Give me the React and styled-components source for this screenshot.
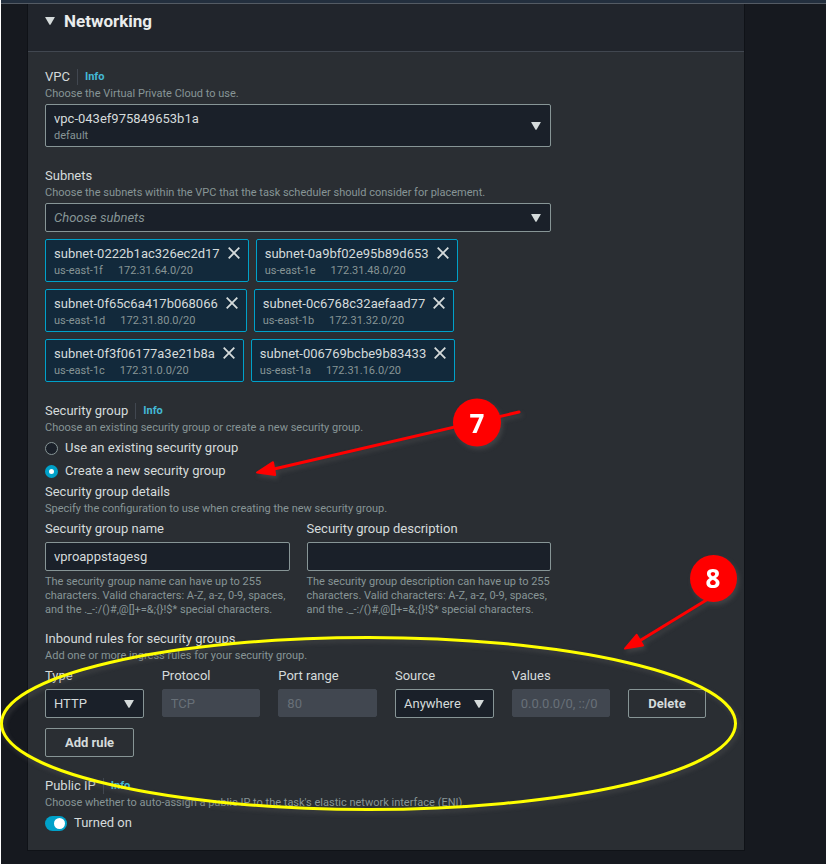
import React, { useState } from "react";
import styled, { createGlobalStyle, css } from "styled-components";

const GlobalStyle = createGlobalStyle`
  * { box-sizing: border-box; }
  body { margin: 0; background: #16191f; }
  body, button, input, select { font-family: Roboto, "Noto Sans", sans-serif; }
`;

const Page = styled.div`
  position: relative;
  min-height: 100vh;
  border-left: 1px solid #ffffff;
  background: #16191f;
  color: #d5dbdb;
  font-size: 13px;
  line-height: 18px;
`;

const TopBar = styled.div`
  height: 4px;
  background: #232f3e;
  border-bottom: 1px solid #545b64;
`;

const Panel = styled.section`
  margin: 0 82px 0 27px;
  background: #2a2e33;
  box-shadow: 0 0 0 1px #0f1217;
  clip-path: inset(0 -1px -1px -1px);
`;

const PanelHeader = styled.h2`
  margin: 0;
  padding: 5px 17px 18px;
  background: #21252c;
  border-bottom: 1px solid #414750;
`;

const PanelToggle = styled.button`
  display: flex;
  align-items: center;
  gap: 9px;
  padding: 0;
  border: 0;
  background: none;
  color: #eaeded;
  font-size: 17px;
  line-height: 24px;
  font-weight: 700;
`;

const PanelBody = styled.div`
  display: flex;
  flex-direction: column;
  gap: 20px;
  padding: 16px 17px 18px;
`;

const Section = styled.div`
  display: flex;
  flex-direction: column;
  gap: ${(p) => (p.$tight ? "2px" : "3px")};
  max-width: ${(p) => (p.$wide ? "none" : "506px")};
`;

const Intro = styled.div`
  padding-top: ${(p) => (p.$spaced ? "10px" : 0)};
`;

const LabelRow = styled.div`
  display: flex;
  align-items: center;
`;

const InfoLink = styled.a`
  margin-left: 7px;
  padding-left: 7px;
  border-left: 1px solid #414750;
  color: #44b9d6;
  font-size: 11px;
  line-height: 16px;
  font-weight: 700;
  text-decoration: none;
`;

const Hint = styled.div`
  color: #879596;
  font-size: 11px;
  line-height: ${(p) => (p.$multi ? "14px" : "16px")};
`;

const SelectBox = styled.div`
  display: grid;
  align-items: center;
  & > * { grid-area: 1 / 1; }
`;

const controlStyle = css`
  width: 100%;
  min-width: 0;
  height: 29px;
  padding: 0 8px;
  border: 1px solid #879596;
  border-radius: 2px;
  background: #1a2029;
  color: #d5dbdb;
  font-size: 13px;
  line-height: 18px;
`;

const Select = styled.select`
  ${controlStyle}
  appearance: none;
  ${(p) => p.$tall && css`height: 43px; padding-bottom: 14px;`}
  ${(p) => p.$placeholder && css`color: #879596; font-style: italic;`}
`;

const SelectNote = styled.span`
  align-self: end;
  padding: 0 9px 3px;
  color: #879596;
  font-size: 11px;
  line-height: 16px;
  pointer-events: none;
`;

const Caret = styled.svg`
  width: 10px;
  height: 8px;
  fill: #d5dbdb;
  flex: none;
  ${SelectBox} & {
    justify-self: end;
    margin-right: 10px;
    pointer-events: none;
  }
`;

const Input = styled.input`
  ${controlStyle}
  &:disabled {
    height: 28px;
    border-color: #414750;
    background: #414750;
    color: #687078;
  }
`;

const TokenList = styled.ul`
  display: flex;
  flex-wrap: wrap;
  gap: 7px;
  margin: 5px 0 0;
  padding: 0;
  list-style: none;
`;

const Token = styled.li`
  display: flex;
  align-items: flex-start;
  gap: 8px;
  padding: 5px 8px 2px;
  border: 1px solid #00a1c9;
  border-radius: 2px;
  background: #12293b;
`;

const TokenTags = styled.div`
  display: flex;
  gap: 15px;
  color: #879596;
  font-size: 11px;
  line-height: 16px;
`;

const RemoveButton = styled.button`
  display: flex;
  margin-top: 2px;
  padding: 0;
  border: 0;
  background: none;
  color: #d5dbdb;
`;

const RadioGroup = styled.div`
  display: flex;
  flex-direction: column;
  gap: 5px;
`;

const Choice = styled.label`
  display: flex;
  align-items: center;
  gap: 7px;
`;

const Radio = styled.input`
  appearance: none;
  width: 13px;
  height: 13px;
  margin: 0;
  border: 1px solid #879596;
  border-radius: 50%;
  background: #1a2029;
  &:checked {
    border: 4px solid #00a1c9;
    background: #ffffff;
  }
`;

const Switch = styled.input`
  appearance: none;
  display: flex;
  width: 22px;
  height: 15px;
  margin: 0;
  padding: 2px;
  border-radius: 8px;
  background: #687078;
  &::before {
    content: "";
    width: 11px;
    height: 11px;
    border-radius: 50%;
    background: #ffffff;
  }
  &:checked {
    justify-content: flex-end;
    background: #00a1c9;
  }
`;

const TwoColumns = styled.div`
  display: grid;
  grid-template-columns: 1fr 1fr;
  gap: 17px;
`;

const Field = styled.div`
  display: flex;
  flex-direction: column;
  gap: 4px;
`;

const RuleGrid = styled.div`
  display: grid;
  grid-template-columns: repeat(6, minmax(0, 1fr));
  align-items: end;
  gap: 18px;
  margin-bottom: 7px;
`;

const RuleField = styled(Field)`
  align-self: start;
`;

const Button = styled.button`
  align-self: flex-start;
  justify-self: start;
  height: 29px;
  padding: 0 19px;
  border: 1px solid #879596;
  border-radius: 2px;
  background: transparent;
  color: #d5dbdb;
  font-size: 13px;
  line-height: 18px;
  font-weight: 700;
  ${RuleGrid} & { align-self: end; }
`;

const Annotations = styled.svg`
  position: absolute;
  top: 0;
  left: -1px;
  pointer-events: none;
  filter: drop-shadow(2px 3px 2px rgba(90, 90, 90, 0.45));
`;

const CalloutText = styled.text`
  fill: #ffffff;
  font-family: "Open Sans", "Noto Sans", sans-serif;
  font-size: 26px;
  font-weight: 700;
  text-anchor: middle;
`;

function Triangle() {
  return (
    <Caret viewBox="0 0 10 8" aria-hidden="true">
      <path d="M.5 0h9q.5 0 .2.6L5.6 7.5q-.6.8-1.2 0L.3.6Q0 0 .5 0z" />
    </Caret>
  );
}

function Heading({ htmlFor, children, info }) {
  return (
    <LabelRow>
      {htmlFor ? <label htmlFor={htmlFor}>{children}</label> : <span>{children}</span>}
      {info && <InfoLink href="#info">Info</InfoLink>}
    </LabelRow>
  );
}

const initialSubnets = [
  ["subnet-0222b1ac326ec2d17", "us-east-1f", "172.31.64.0/20"],
  ["subnet-0a9bf02e95b89d653", "us-east-1e", "172.31.48.0/20"],
  ["subnet-0f65c6a417b068066", "us-east-1d", "172.31.80.0/20"],
  ["subnet-0c6768c32aefaad77", "us-east-1b", "172.31.32.0/20"],
  ["subnet-0f3f06177a3e21b8a", "us-east-1c", "172.31.0.0/20"],
  ["subnet-006769bcbe9b83433", "us-east-1a", "172.31.16.0/20"],
];

export default function App() {
  const [open, setOpen] = useState(true);
  const [subnets, setSubnets] = useState(initialSubnets);
  return (
    <Page>
      <GlobalStyle />
      <TopBar />
      <Panel>
        <PanelHeader>
          <PanelToggle aria-expanded={open} onClick={() => setOpen(!open)}>
            <Triangle />
            Networking
          </PanelToggle>
        </PanelHeader>
        {open && (
          <PanelBody>
            <Section $tight>
              <Intro>
                <Heading htmlFor="vpc" info>VPC</Heading>
                <Hint>Choose the Virtual Private Cloud to use.</Hint>
              </Intro>
              <SelectBox>
                <Select id="vpc" $tall>
                  <option>vpc-043ef975849653b1a</option>
                </Select>
                <SelectNote>default</SelectNote>
                <Triangle />
              </SelectBox>
            </Section>

            <Section $tight>
              <Intro>
                <Heading htmlFor="subnets">Subnets</Heading>
                <Hint>Choose the subnets within the VPC that the task scheduler should consider for placement.</Hint>
              </Intro>
              <SelectBox>
                <Select id="subnets" $placeholder>
                  <option>Choose subnets</option>
                </Select>
                <Triangle />
              </SelectBox>
              <TokenList>
                {subnets.map(([id, zone, cidr]) => (
                  <Token key={id}>
                    <div>
                      <div>{id}</div>
                      <TokenTags>
                        <span>{zone}</span>
                        <span>{cidr}</span>
                      </TokenTags>
                    </div>
                    <RemoveButton
                      aria-label={`Remove ${id}`}
                      onClick={() => setSubnets(subnets.filter((s) => s[0] !== id))}
                    >
                      <svg width="12" height="12" viewBox="0 0 12 12" stroke="currentColor" strokeWidth="1.8">
                        <path d="M.7.7l10.6 10.6M11.3.7L.7 11.3" />
                      </svg>
                    </RemoveButton>
                  </Token>
                ))}
              </TokenList>
            </Section>

            <Section $wide>
              <Intro>
                <Heading info>Security group</Heading>
                <Hint>Choose an existing security group or create a new security group.</Hint>
              </Intro>
              <RadioGroup role="radiogroup" aria-label="Security group">
                <Choice>
                  <Radio type="radio" name="sg" />
                  Use an existing security group
                </Choice>
                <Choice>
                  <Radio type="radio" name="sg" defaultChecked />
                  Create a new security group
                </Choice>
              </RadioGroup>
              <Intro>
                <Heading>Security group details</Heading>
                <Hint>Specify the configuration to use when creating the new security group.</Hint>
              </Intro>
              <Section>
                <TwoColumns>
                  <Field>
                    <label htmlFor="sg-name">Security group name</label>
                    <Input id="sg-name" defaultValue="vproappstagesg" />
                    <Hint $multi>
                      The security group name can have up to 255 characters. Valid characters: A-Z, a-z, 0-9, spaces,
                      and the ._-:/()#,@[]+=&amp;;{"{}"}!$* special characters.
                    </Hint>
                  </Field>
                  <Field>
                    <label htmlFor="sg-desc">Security group description</label>
                    <Input id="sg-desc" />
                    <Hint $multi>
                      The security group description can have up to 255 characters. Valid characters: A-Z, a-z, 0-9,
                      spaces, and the ._-:/()#,@[]+=&amp;;{"{}"}!$* special characters.
                    </Hint>
                  </Field>
                </TwoColumns>
              </Section>
              <Intro $spaced>
                <Heading>Inbound rules for security groups</Heading>
                <Hint>Add one or more ingress rules for your security group.</Hint>
              </Intro>
              <RuleGrid>
                <RuleField>
                  <label htmlFor="type">Type</label>
                  <SelectBox>
                    <Select id="type"><option>HTTP</option></Select>
                    <Triangle />
                  </SelectBox>
                </RuleField>
                <RuleField>
                  <label htmlFor="protocol">Protocol</label>
                  <Input id="protocol" defaultValue="TCP" disabled />
                </RuleField>
                <RuleField>
                  <label htmlFor="port">Port range</label>
                  <Input id="port" defaultValue="80" disabled />
                </RuleField>
                <RuleField>
                  <label htmlFor="source">Source</label>
                  <SelectBox>
                    <Select id="source"><option>Anywhere</option></Select>
                    <Triangle />
                  </SelectBox>
                </RuleField>
                <RuleField>
                  <label htmlFor="values">Values</label>
                  <Input id="values" defaultValue="0.0.0.0/0, ::/0" disabled />
                </RuleField>
                <Button>Delete</Button>
              </RuleGrid>
              <Button>Add rule</Button>
            </Section>

            <Section>
              <Intro>
                <Heading info>Public IP</Heading>
                <Hint>Choose whether to auto-assign a public IP to the task's elastic network interface (ENI).</Hint>
              </Intro>
              <Choice>
                <Switch type="checkbox" role="switch" defaultChecked />
                Turned on
              </Choice>
            </Section>
          </PanelBody>
        )}
      </Panel>

      <Annotations width="826" height="864" viewBox="0 0 826 864">
        <ellipse cx="368.5" cy="723.5" rx="367" ry="86" fill="none" stroke="#ffff00" strokeWidth="3" />
        <g fill="#ff0000" stroke="#ff0000" strokeLinecap="round" strokeLinejoin="round">
          <path d="M519 412L274 469" strokeWidth="3" />
          <path d="M257 472.5L273 462.2L275.2 475z" strokeWidth="2" />
          <path d="M713 596L641 640" strokeWidth="3" />
          <path d="M625 648.6L636.6 634.8L643 645.4z" strokeWidth="2" />
        </g>
        <circle cx="477" cy="422.5" r="24" fill="#ff0000" />
        <circle cx="713.5" cy="578.5" r="23.5" fill="#ff0000" />
        <CalloutText x="477" y="433">7</CalloutText>
        <CalloutText x="713" y="588">8</CalloutText>
      </Annotations>
    </Page>
  );
}
